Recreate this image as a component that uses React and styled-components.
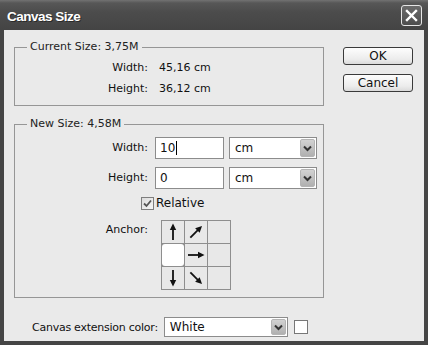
import React from 'react'
import styled, { createGlobalStyle } from 'styled-components'

const GlobalStyle = createGlobalStyle`
  html, body {
    margin: 0;
    padding: 0;
    background: #eaeaea;
  }
  body {
    font-family: "DejaVu Sans", Verdana, sans-serif;
    font-size: 11px;
    color: #111;
  }
`

const Window = styled.div`
  width: 428px;
  height: 345px;
  display: flex;
  flex-direction: column;
  overflow: hidden;
`

const TitleBar = styled.div`
  height: 30px;
  flex: none;
  display: flex;
  align-items: center;
  justify-content: space-between;
  padding: 0 6px 0 7px;
  box-sizing: border-box;
  background: linear-gradient(#727272 0, #575757 3px, #4c4c4c 40%, #444 100%);
`

const Title = styled.div`
  font-family: "Liberation Sans", Arial, sans-serif;
  font-weight: bold;
  font-size: 13.5px;
  letter-spacing: -0.5px;
  color: #fff;
  text-shadow: 1px 1px 0 #2a2a2a;
  padding-top: 2px;
`

const CloseButton = styled.div`
  width: 19px;
  height: 19px;
  border: 1px solid #e6e6e6;
  border-radius: 3px;
  background: linear-gradient(#6a6a6a, #4e4e4e);
  display: flex;
  align-items: center;
  justify-content: center;
  margin-top: 1px;
`

const Body = styled.div`
  flex: 1;
  background: #eaeaea;
  border: 4px solid #454545;
  border-top: none;
  padding: 10px 0 0 10px;
  display: flex;
  flex-direction: column;
`

const Main = styled.div`
  display: flex;
  align-items: flex-start;
`

const Column = styled.div`
  width: 310px;
  display: flex;
  flex-direction: column;
  gap: 11px;
`

const Group = styled.fieldset`
  margin: 0;
  min-inline-size: 0;
  border: 1px solid #969696;
  padding: ${p => p.$pad};
  display: flex;
  flex-direction: column;
`

const Legend = styled.legend`
  margin-left: 12px;
  padding: 0 3px;
  line-height: 14px;
  color: #222;
`

const Row = styled.div`
  display: grid;
  grid-template-columns: 133px auto;
  column-gap: ${p => p.$gap}px;
  align-items: center;
  height: ${p => p.$h}px;
  margin-top: ${p => p.$top || 0}px;
`

const Label = styled.div`
  text-align: right;
  line-height: 20px;
  align-self: ${p => (p.$start ? 'start' : 'center')};
`

const Value = styled.div`
  line-height: 20px;
`

const Controls = styled.div`
  display: flex;
  align-items: center;
  gap: 5px;
`

const TextBox = styled.div`
  width: 69px;
  height: 22px;
  box-sizing: border-box;
  border: 1px solid #8c8c8c;
  background: #fff;
  padding-left: 4px;
  display: flex;
  align-items: center;
  font-size: 12px;
`

const Caret = styled.span`
  display: inline-block;
  width: 1px;
  height: 14px;
  background: #000;
  margin-left: 1px;
`

const Select = styled.div`
  width: ${p => p.$w}px;
  height: ${p => p.$h}px;
  box-sizing: border-box;
  border: 1px solid #8c8c8c;
  background: #fff;
  display: flex;
  align-items: center;
  justify-content: space-between;
  padding: 1px 1px 1px 5px;
  font-size: 12px;
`

const DropButton = styled.div`
  width: 15px;
  height: 100%;
  box-sizing: border-box;
  border-radius: 2px;
  border: 1px solid #b4b4b4;
  background: linear-gradient(#d2d2d2, #b0b0b0);
  display: flex;
  align-items: center;
  justify-content: center;
`

const CheckRow = styled.div`
  display: flex;
  align-items: center;
  gap: 2px;
  height: 14px;
  margin-top: 7px;
  padding-left: 126px;
  font-size: 12px;
`

const CheckBox = styled.div`
  width: 13px;
  height: 13px;
  box-sizing: border-box;
  border: 1px solid #7e7e7e;
  background: linear-gradient(135deg, #dcdcdc, #f6f6f6);
  display: flex;
  align-items: center;
  justify-content: center;
`

const AnchorGrid = styled.div`
  display: grid;
  grid-template-columns: repeat(3, 22px);
  grid-template-rows: repeat(3, 22px);
  gap: 1px;
  background: #8e8e8e;
  border: 1px solid #8e8e8e;
  width: max-content;
`

const Cell = styled.div`
  background: ${p => (p.$on ? '#fff' : '#e8e8e8')};
  border-radius: ${p => (p.$on ? '3px' : '0')};
  display: flex;
  align-items: center;
  justify-content: center;
`

const Buttons = styled.div`
  margin-left: 19px;
  padding-top: 7px;
  display: flex;
  flex-direction: column;
  gap: 9px;
`

const Button = styled.div`
  width: 70px;
  height: 18px;
  box-sizing: border-box;
  border: 1px solid #3a3a3a;
  border-radius: 3px;
  background: linear-gradient(#fdfdfd, #ececec 70%, #dadada);
  display: flex;
  align-items: center;
  justify-content: center;
  font-size: 12px;
  color: #111;
`

const Footer = styled.div`
  display: flex;
  align-items: center;
  margin-top: 19px;
  padding-left: 18px;
`

const FooterLabel = styled.div`
  letter-spacing: -0.25px;
  margin-right: 6px;
`

const Swatch = styled.div`
  width: 14px;
  height: 14px;
  box-sizing: border-box;
  border: 1px solid #777;
  background: #fff;
  margin-left: 6px;
`

const Chevron = () => (
  <svg width="9" height="7" viewBox="0 0 9 7">
    <path d="M1 1.5 L4.5 5 L8 1.5" fill="none" stroke="#333" strokeWidth="2" />
  </svg>
)

// arrow drawn inside a 22px cell, rotated to its direction
const Arrow = ({ dir }) => {
  const rot = { up: -90, ne: -45, right: 0, down: 90, se: 45 }[dir]
  return (
    <svg width="20" height="20" viewBox="-10 -10 20 20">
      <g transform={`rotate(${rot})`}>
        <line x1="-8" y1="0" x2="4" y2="0" stroke="#111" strokeWidth="1.8" />
        <path d="M8.5 0 L2 -3.2 L2 3.2 Z" fill="#111" />
      </g>
    </svg>
  )
}

const anchorCells = ['up', 'ne', null, 'on', 'right', null, 'down', 'se', null]

const CanvasSizeDialog = () => (
  <Window>
    <TitleBar>
      <Title>Canvas Size</Title>
      <CloseButton>
        <svg width="13" height="13" viewBox="0 0 13 13">
          <path d="M2 2 L11 11 M11 2 L2 11" stroke="#fff" strokeWidth="2.4" strokeLinecap="square" />
        </svg>
      </CloseButton>
    </TitleBar>
    <Body>
      <Main>
        <Column>
          <Group $pad="4px 0 6px 0">
            <Legend>Current Size: 3,75M</Legend>
            <Row $gap={11} $h={20}>
              <Label>Width:</Label>
              <Value>45,16 cm</Value>
            </Row>
            <Row $gap={11} $h={20} $top={1}>
              <Label>Height:</Label>
              <Value>36,12 cm</Value>
            </Row>
          </Group>
          <Group $pad="6px 0 7px 0">
            <Legend>New Size: 4,58M</Legend>
            <Row $gap={7} $h={22}>
              <Label>Width:</Label>
              <Controls>
                <TextBox>10<Caret /></TextBox>
                <Select $w={88} $h={22}>
                  cm
                  <DropButton><Chevron /></DropButton>
                </Select>
              </Controls>
            </Row>
            <Row $gap={7} $h={22} $top={8}>
              <Label>Height:</Label>
              <Controls>
                <TextBox>0</TextBox>
                <Select $w={88} $h={22}>
                  cm
                  <DropButton><Chevron /></DropButton>
                </Select>
              </Controls>
            </Row>
            <CheckRow>
              <CheckBox>
                <svg width="9" height="9" viewBox="0 0 9 9">
                  <path d="M1 4.5 L3.5 7 L8 1.5" fill="none" stroke="#555" strokeWidth="1.8" />
                </svg>
              </CheckBox>
              Relative
            </CheckRow>
            <Row $gap={13} $h={70} $top={10}>
              <Label $start>Anchor:</Label>
              <AnchorGrid>
                {anchorCells.map((c, i) => (
                  <Cell key={i} $on={c === 'on'}>
                    {c && c !== 'on' && <Arrow dir={c} />}
                  </Cell>
                ))}
              </AnchorGrid>
            </Row>
          </Group>
        </Column>
        <Buttons>
          <Button>OK</Button>
          <Button>Cancel</Button>
        </Buttons>
      </Main>
      <Footer>
        <FooterLabel>Canvas extension color:</FooterLabel>
        <Select $w={124} $h={20}>
          White
          <DropButton><Chevron /></DropButton>
        </Select>
        <Swatch />
      </Footer>
    </Body>
  </Window>
)

export default function App() {
  return (
    <>
      <GlobalStyle />
      <CanvasSizeDialog />
    </>
  )
}
